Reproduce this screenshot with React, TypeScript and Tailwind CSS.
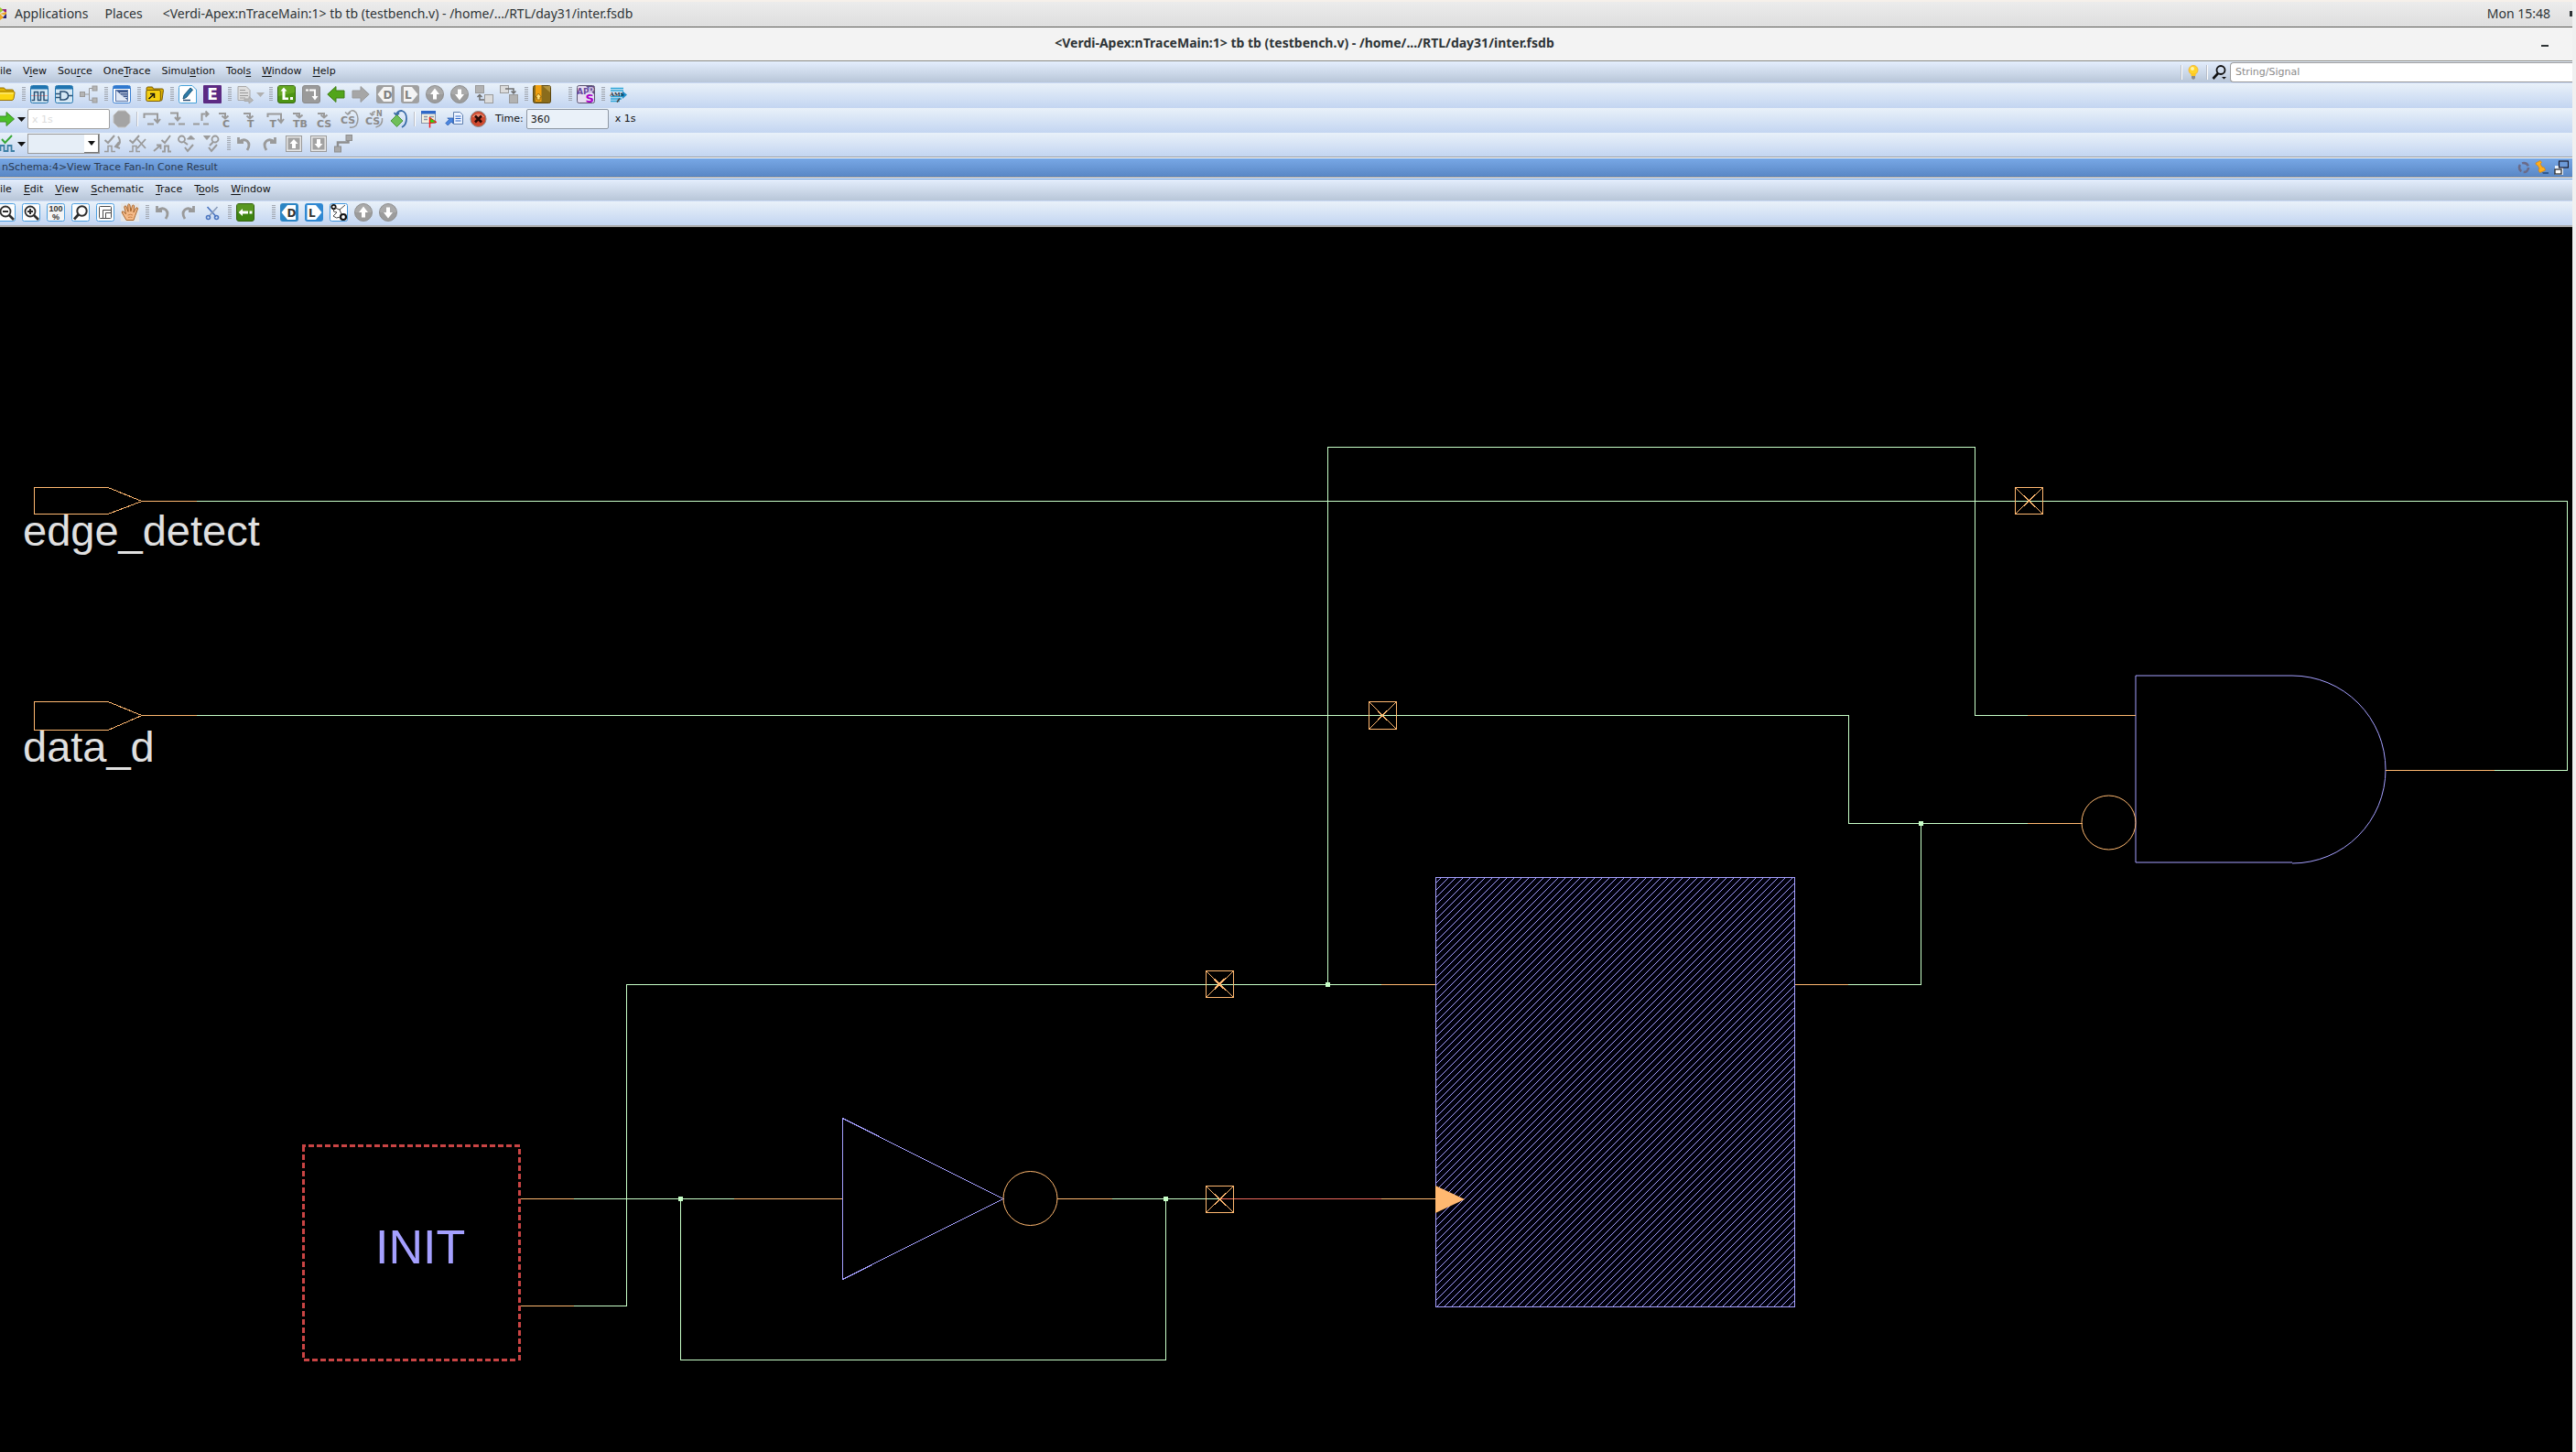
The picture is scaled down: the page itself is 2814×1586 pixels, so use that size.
import React from "react";

const G = "#9a9a9a";
const icons: Record<string, React.ReactNode> = {
  folder: (
    <g stroke="#9a7200">
      <path d="M1 4.5q0-1.500 1.500-1.500h5l1.500 2h7.500q1 0 1 1v2H1z" fill="#e0b400" />
      <path d="M1 8.500q0-1.500 1.500-1.500h15q2 0 1.500 1.500l-1 6q-.5 2-2 2H2.500q-1.500 0-1.500-1.500z" fill="#fbd510" />
      <path d="M2 9h15.500" stroke="#fff2a0" />
    </g>
  ),
  wave: (
    <g>
      <rect x=".5" y=".5" width="19" height="19" rx="2" fill="#d5e8f5" stroke="#2476ae" />
      <path d="M1 1h18v3.500H1z" fill="#1f74b0" />
      <path d="M1 11.500h18" stroke="#f0a0a0" />
      <path d="M1.500 16.500h3v-9h4v9h3v-9h3.500v9h4" fill="none" stroke="#2a4f73" strokeWidth="1.500" />
    </g>
  ),
  gate: (
    <g>
      <rect x=".5" y=".5" width="19" height="19" rx="2" fill="#d5e8f5" stroke="#2476ae" />
      <path d="M1 1h18v3.500H1z" fill="#1f74b0" />
      <path d="M6 7h4q4.500.5 4.500 4.500T10 16H6zM1 9.500h5M1 13.500h5M14.500 11.500H19" fill="none" stroke="#2a4f73" strokeWidth="1.500" />
    </g>
  ),
  tree: (
    <g fill="#b4b4b4" stroke={G}>
      <path d="M5 10h6M10.500 3.500v13M10.500 3.500h4M10.500 16.500h4" fill="none" />
      <rect x=".5" y="7.500" width="5" height="5" />
      <rect x="14" y="1" width="5" height="5" />
      <rect x="14" y="14" width="5" height="5" />
    </g>
  ),
  schema: (
    <g>
      <rect x=".5" y=".5" width="19" height="19" rx="2" fill="#fff" stroke="#3a7fd0" />
      <path d="M1 1h18v3H1z" fill="#2f78cf" />
      <rect x="3.500" y="5.500" width="13" height="12" fill="#dfe7f5" stroke="#5a78ac" />
      <path d="M4 6h12v10z" fill="#3c5588" />
      <path d="M8 8.500h8M10 11h6M13 13.500h3" stroke="#c8d4ea" />
    </g>
  ),
  folderPin: (
    <g stroke="#7a5a00">
      <path d="M1 4q0-2 1.500-2h5l1 2H18q1.500 0 1.500 1.500L18 16q0 1-1.500 1H3z" fill="#d9ae00" />
      <rect x=".8" y="5.500" width="15.500" height="12" rx="1.500" fill="#f4cf12" />
      <path d="M3.500 15 8.500 10.500M5 9.500h4.500V14" stroke="#111" strokeWidth="1.500" fill="none" />
    </g>
  ),
  pencil: (
    <g>
      <path d="M2.500.5H15l4.500 4.500v14.500H2.500Q.5 19.500.5 17.500v-15Q.5.500 2.500.5z" fill="#fff" stroke="#45a0d8" />
      <path d="m6 11 7-8 2.500 2-7 8.500L5 15z" fill="#2e7ca8" stroke="#1c5578" />
      <path d="M5 16.500h8" stroke="#2a4f73" strokeWidth="1.500" />
    </g>
  ),
  e: (
    <g>
      <rect width="20" height="20" rx="1" fill="#5c2a83" />
      <text x="10" y="16" textAnchor="middle" fontSize="17" fontWeight="700" fill="#fff">E</text>
    </g>
  ),
  doc: (
    <g stroke="#a8a8a8">
      <path d="M2 1.500h9l4 4v11H2z" fill="#dedede" />
      <path d="M4 5.500h6M4 8.500h9M4 11.500h9M4 14h6" stroke={G} />
      <path d="M9 15h5v-2.500l4.500 4-4.500 3.500v-2.500H9z" fill="#b8b8b8" />
    </g>
  ),
  loadGreen: (
    <g>
      <rect x=".5" y=".5" width="19" height="19" rx="2.500" fill="#4d9414" stroke="#3a6b12" />
      <path d="M1 1h18v7Q10 10 1 12z" fill="#77b52c" opacity=".6" />
      <path d="M3.500 6.500 7 2.500l3.500 4H8.500v7H12V16H5.500V6.500zM14 13h3v3h-3z" fill="#fff" />
    </g>
  ),
  loadGray: (
    <g>
      <rect x=".5" y=".5" width="19" height="19" rx="2.500" fill={G} stroke="#8a8a8a" />
      <path d="M4 4.500h3v2H4zM8 4.500h7V12h2.500L14 16.500 10.500 12H13V6.500H8z" fill="#fff" />
    </g>
  ),
  leftGreen: <path d="M.8 10 10 1.500V6h9v8h-9v4.500z" fill="#52a51a" stroke="#3e7c15" />,
  rightGray: <path d="M19.200 10 10 1.500V6H1v8h9v4.500z" fill="#a6a6a6" stroke="#999" />,
  dGray: (
    <g>
      <rect width="20" height="20" rx="3" fill="#a0a0a0" />
      <path d="M1.500 10 8 2h9v16H8z" fill="#f4f4f4" />
      <text x="7.500" y="14.500" fontSize="12" fontWeight="700" fill="#808080">D</text>
    </g>
  ),
  lGray: (
    <g>
      <rect width="20" height="20" rx="3" fill="#a0a0a0" />
      <path d="M18.500 10 12 2H3v16h9z" fill="#f4f4f4" />
      <text x="4" y="14.500" fontSize="12" fontWeight="700" fill="#808080">L</text>
    </g>
  ),
  up: (
    <g>
      <circle cx="10" cy="10" r="9.500" fill="#9c9c9c" stroke="#8f8f8f" />
      <path d="M1 10a9 9 0 0 1 18 0z" fill="#b4b4b4" opacity=".6" />
      <path d="M10 3.500 15 10h-3v5.500H8V10H5z" fill="#fff" />
    </g>
  ),
  down: (
    <g>
      <circle cx="10" cy="10" r="9.500" fill="#9c9c9c" stroke="#8f8f8f" />
      <path d="M1 10a9 9 0 0 1 18 0z" fill="#b4b4b4" opacity=".6" />
      <path d="M10 16.500 5 10h3V4.500h4V10h3z" fill="#fff" />
    </g>
  ),
  hierUp: (
    <g>
      <rect x=".5" y=".5" width="9" height="8" fill="#b2b2b2" stroke="#9a9a9a" />
      <rect x="10.500" y="10.500" width="9" height="9" fill="#dcdcdc" stroke="#9a9a9a" />
      <path d="M10 16H5v-5M2.500 13 5 10.500 7.500 13" fill="none" stroke="#6f6f6f" strokeWidth="1.500" />
    </g>
  ),
  hierDown: (
    <g>
      <rect x=".5" y=".5" width="9" height="8" fill="#dcdcdc" stroke="#9a9a9a" />
      <rect x="10.500" y="10.500" width="9" height="9" fill="#b2b2b2" stroke="#9a9a9a" />
      <path d="M6 4h9v5M12.500 6.500 15 9l2.500-2.500" fill="none" stroke="#6f6f6f" strokeWidth="1.500" />
    </g>
  ),
  bookmark: (
    <g>
      <rect x=".5" y=".5" width="19" height="19" rx="2" fill="#8a6c1c" stroke="#5b4610" />
      <path d="M11 1h8v7z" fill="#b39440" />
      <path d="M3 0h6.500v18H3z" fill="#f0a010" />
      <path d="M3 13 6.200 9l3.300 4H8v3H4.500v-3z" fill="#ffe07a" stroke="#8a5a00" strokeWidth=".8" />
    </g>
  ),
  apps: (
    <g>
      <rect x=".5" y=".5" width="19" height="19" rx="2" fill="#e6def2" stroke="#5a5570" />
      <path d="M10 1h9v9z" fill="#5d4a86" />
      <text x="0" y="10" fontSize="9" fontWeight="700" fill="#6a4a9c">AP</text>
      <text x="12.500" y="9" fontSize="9" fontWeight="700" fill="#c8bce0">P</text>
      <text x="9.500" y="18.500" fontSize="13" fontWeight="700" fill="#a800c8">S</text>
    </g>
  ),
  ams: (
    <g>
      <path d="M1 3.500h14M1 6h14M1 12.500h14M1 15h12M1 17.500h10" stroke="#2ea6d8" strokeWidth="1.500" />
      <path d="M12 9h2V6.500l5 4-5 4.500v-2.500h-2z" fill="#1e90c8" />
      <text x="0" y="11.500" fontSize="7" fontWeight="700" fontFamily="Liberation Serif, serif" fill="#10242e">AMS</text>
      <path d="m8 18.500 3-4" stroke="#444" strokeWidth="1.500" />
    </g>
  ),
  runGreen: <path d="M1 7h9V2.500L18.500 10 10 17.500V13H1z" fill="#4cc02a" stroke="#3a8a22" />,
  octagon: <path d="M6 1h8l5 5v8l-5 5H6l-5-5V6z" fill="#a4a4a4" stroke="#c4c4c4" />,
  stepOver: <path d="M1.500 9V4.500H16V13M12.500 10l3.500 4 3-4M5 15.500h7" fill="none" stroke={G} strokeWidth="2" />,
  stepIn: <path d="M3 3.500h8V11M8 8l3 3.500L14 8M1 15.500h7M12 15.500h7" fill="none" stroke={G} strokeWidth="2" />,
  stepOut: <path d="M10.500 12V4.500H17M14.500 1.500l3 3-3 3M1 15.500h7M12 15.500h6" fill="none" stroke={G} strokeWidth="2" />,
  c: (
    <g>
      <path d="M2 4h7v5M5.500 6.500 9 9.500l3.500-3" fill="none" stroke={G} strokeWidth="2" />
      <text x="6" y="19" fontSize="11" fontWeight="700" fill="#8a8a8a">C</text>
    </g>
  ),
  t: (
    <g>
      <path d="M2 4h7v5M5.500 6.500 9 9.500l3.500-3" fill="none" stroke={G} strokeWidth="2" />
      <text x="6" y="19" fontSize="11" fontWeight="700" fill="#8a8a8a">T</text>
    </g>
  ),
  tOver: (
    <g>
      <path d="M1.500 8V4.500H16V13M12.500 10l3.500 4 3-4" fill="none" stroke={G} strokeWidth="2" />
      <text x="3.500" y="18.500" fontSize="11" fontWeight="700" fill="#8a8a8a">T</text>
    </g>
  ),
  tb: (
    <g>
      <path d="M2 4h7v4M5.500 5.500 9 8.500l3.500-3" fill="none" stroke={G} strokeWidth="2" />
      <text x="2" y="19" fontSize="11" fontWeight="700" fill="#8a8a8a">TB</text>
    </g>
  ),
  cs: (
    <g>
      <path d="M2 4h7v4M5.500 5.500 9 8.500l3.500-3" fill="none" stroke={G} strokeWidth="2" />
      <text x="1" y="19" fontSize="11" fontWeight="700" fill="#8a8a8a">CS</text>
    </g>
  ),
  csLoop: (
    <g>
      <path d="M8 4.500Q12-2 17 3q4 7 0 14-3 3-7 2M5 2.500 8 5l3-2" fill="none" stroke={G} strokeWidth="1.500" />
      <text x="0" y="14.500" fontSize="11" fontWeight="700" fill="#8a8a8a">CS</text>
    </g>
  ),
  csn: (
    <g>
      <path d="M11 2Q7 2 7.500 5M5 3.500l2.500 2.500L10 4M18.500 9q1 8-7 10" fill="none" stroke={G} strokeWidth="1.500" />
      <text x="12" y="6.500" fontSize="8" fontWeight="700" fill="#8a8a8a">N</text>
      <text x="0" y="15.500" fontSize="11" fontWeight="700" fill="#8a8a8a">CS</text>
    </g>
  ),
  diamond: (
    <g>
      <path d="M7 4.500Q9 .8 13 1q5 1.500 5 8.500 0 7-5 9.500M4.500 3 7 6l3-2.500" fill="none" stroke="#3a6ca8" strokeWidth="1.800" />
      <path d="m1 12 6.500-6.500L14 12l-6.500 6.500z" fill="#6fbf5a" stroke="#4d9440" />
    </g>
  ),
  flagWin: (
    <g>
      <rect x="1.500" y="1.500" width="15" height="13" fill="#f2f0e0" stroke="#8a93a8" />
      <path d="M1 1h16v3.500H1z" fill="#2f68c8" />
      <path d="M4 7.500h4M4 10.500h4M10 7.500h5" stroke="#8a93a8" strokeWidth="1.500" />
      <path d="M10.500 8.500 18 13.500l-7.500 1z" fill="#22e010" stroke="#f01818" />
      <path d="M10.500 8v11.500" stroke="#f01818" strokeWidth="1.500" />
    </g>
  ),
  docLink: (
    <g>
      <path d="M9.500 2.500h7l3 3v10h-10z" fill="#eef4ff" stroke="#5f7fae" />
      <path d="M11.500 7h6M11.500 9.500h6M11.500 12h6" stroke="#2f68c8" strokeWidth="1.200" />
      <path d="m.8 14.500 4-4-2-1.500H9V15l-1.800-2-4 4z" fill="#4a86e0" stroke="#2a5cb0" strokeWidth=".8" />
    </g>
  ),
  stopX: (
    <g>
      <circle cx="9.500" cy="10" r="8.500" fill="#cf4a30" stroke="#8b8b8b" />
      <path d="M3 8a7 6 0 0 1 13 0z" fill="#ec8a70" />
      <path d="m6 6.500 7 7m0-7-7 7" stroke="#2a0a06" strokeWidth="2.600" />
    </g>
  ),
  checkWave: (
    <g fill="none">
      <path d="M3.500 18v-6h4v6h4v-6h4v6H19" stroke="#3d7fa4" strokeWidth="1.800" />
      <path d="m5 5 3.500 4L16 1" stroke="#38a838" strokeWidth="2" />
    </g>
  ),
  chk1: (
    <g fill="none" stroke={G}>
      <path d="M1.500 6 5 9l7-8" strokeWidth="2" />
      <path d="M1 18.500h4v-6h4v6h4" strokeWidth="1.500" />
      <path d="M16 2q5 7-2 11M17 8l-4 5 5 2" strokeWidth="2" />
    </g>
  ),
  chk2: (
    <g fill="none" stroke={G}>
      <path d="M1.500 6 5 9l7-8" strokeWidth="2" />
      <path d="M1 18.500h4v-6h4v6h4" strokeWidth="1.500" />
      <path d="m10 5 9 10M19 5l-9 10" strokeWidth="1.800" />
    </g>
  ),
  chk3: (
    <g fill="none" stroke={G}>
      <path d="M9.500 6 13 9l6-8" strokeWidth="2" />
      <path d="M10 18.500h3v-6h4v6h3M1 18l7-6M4 11.500h4.500V16" strokeWidth="1.800" />
    </g>
  ),
  find1: (
    <g fill="none" stroke={G}>
      <circle cx="4.500" cy="5" r="3.500" strokeWidth="1.800" />
      <path d="m7 8 4 3M8 14l3 4 6-7" strokeWidth="2" />
      <path d="m10.500 5 4-4 4 4z" fill={G} />
    </g>
  ),
  find2: (
    <g fill="none" stroke={G}>
      <circle cx="14" cy="5" r="3.500" strokeWidth="1.800" />
      <path d="m12 8-4 4M7 14l3 4 6-7" strokeWidth="2" />
      <path d="m1.500 1.500 3.500 4 3.500-4z" fill={G} />
    </g>
  ),
  undo: <path d="M3.500 3v5.500H9M4 8q5-4 9-1 4 4 0 10" fill="none" stroke={G} strokeWidth="2.800" />,
  redo: <path d="M16.500 3v5.500H11M16 8q-5-4-9-1-4 4 0 10" fill="none" stroke={G} strokeWidth="2.800" />,
  boxUp: (
    <g>
      <rect x="1.500" y="1.500" width="17" height="17" fill="#e6e6e6" stroke={G} />
      <rect x="3.500" y="3.500" width="13" height="13" fill="#a2a2a2" />
      <path d="m10 5 4.500 5H12v5H8v-5H5.500z" fill="#fff" />
    </g>
  ),
  boxDown: (
    <g>
      <rect x="1.500" y="1.500" width="17" height="17" fill="#e6e6e6" stroke={G} />
      <rect x="3.500" y="3.500" width="13" height="13" fill="#a2a2a2" />
      <path d="m10 15 4.500-5H12V5H8v5H5.500z" fill="#fff" />
    </g>
  ),
  route: (
    <g fill="#a8a8a8" stroke="#8e8e8e">
      <path d="M4 13V8.500h11.500V6" fill="none" strokeWidth="2.500" />
      <rect x="13" y=".5" width="6.500" height="6" />
      <rect x=".5" y="13" width="7" height="6" />
    </g>
  ),
  zoomOut: (
    <g>
      <rect x=".5" y=".5" width="19" height="19" rx="2" fill="#fdfdfd" stroke="#4d9fe0" />
      <circle cx="9" cy="9" r="5.500" fill="none" stroke="#2c2c2c" strokeWidth="1.800" />
      <path d="m13 13 5 5" stroke="#2c2c2c" strokeWidth="2.600" />
      <path d="M6 9h6" stroke="#2c2c2c" strokeWidth="2" />
    </g>
  ),
  zoomIn: (
    <g>
      <rect x=".5" y=".5" width="19" height="19" rx="2" fill="#fdfdfd" stroke="#4d9fe0" />
      <circle cx="9" cy="9" r="5.500" fill="none" stroke="#2c2c2c" strokeWidth="1.800" />
      <path d="m13 13 5 5" stroke="#2c2c2c" strokeWidth="2.600" />
      <path d="M6 9h6M9 6v6" stroke="#2c2c2c" strokeWidth="2" />
    </g>
  ),
  zoom100: (
    <g>
      <rect x=".5" y=".5" width="19" height="19" rx="2" fill="#f4f4f4" stroke="#4d9fe0" />
      <text x="10" y="9" textAnchor="middle" fontSize="9" fontWeight="700" fontFamily="Liberation Sans, sans-serif" fill="#333">100</text>
      <text x="10" y="18" textAnchor="middle" fontSize="9" fontWeight="700" fontFamily="Liberation Sans, sans-serif" fill="#333">%</text>
    </g>
  ),
  zoomArea: (
    <g>
      <rect x=".5" y=".5" width="19" height="19" rx="2" fill="#fdfdfd" stroke="#4d9fe0" />
      <circle cx="11.500" cy="8.500" r="5.200" fill="none" stroke="#2c2c2c" strokeWidth="2" />
      <path d="m7.500 12.500-4.500 5" stroke="#2c2c2c" strokeWidth="2.800" />
    </g>
  ),
  fit: (
    <g>
      <rect x=".5" y=".5" width="19" height="19" rx="2" fill="#fdfdfd" stroke="#4d9fe0" />
      <rect x="3.500" y="3.500" width="13" height="13" rx="1" fill="none" stroke="#4a4a4a" />
      <path d="M7.500 16.500V7.500H16.500M10.500 16v-5.500H16" fill="none" stroke="#4a4a4a" />
    </g>
  ),
  hand: (
    <g>
      <rect width="20" height="20" fill="#e6e6e6" />
      <path d="M6 18.500 1.200 10q0-1.500 1.500-1.200l2.800 3L3.800 4q.5-1.800 2-.8l2.200 6-.3-7.500q1-1.700 2.200 0l1 7.300L12.500 2.500q1.500-1.200 2.200.3l-.8 7.200 2.800-5q1.600-.8 1.900.8l-3 8-1.600 4.700z" fill="#f4b987" stroke="#a8662c" />
      <path d="M7.500 13q3-1.500 5.500 0M8 15.500q2.500-.8 4.500 0" stroke="#c98248" fill="none" />
    </g>
  ),
  cut: (
    <g fill="none" stroke="#4a74c0" strokeWidth="1.600">
      <path d="M4.500 4 14 14.500" />
      <path d="M15.500 4 6 14.500" stroke="#8a9cba" />
      <circle cx="5.500" cy="15.500" r="2" />
      <circle cx="14.500" cy="15.500" r="2" />
    </g>
  ),
  backGreen: (
    <g>
      <rect x=".5" y=".5" width="19" height="19" rx="2.500" fill="#3f8412" stroke="#35610f" />
      <path d="M1 1h18v8H1z" fill="#6aa32c" opacity=".6" />
      <path d="m2.500 10 4.500-4v2.500h6v3H7V14zM14.500 8.500h3v3h-3z" fill="#fff" />
    </g>
  ),
  dBlue: (
    <g>
      <rect width="20" height="20" rx="3" fill="#2b85c4" />
      <path d="M1.500 10 8 2h9v16H8z" fill="#fff" />
      <text x="7.500" y="14.500" fontSize="12" fontWeight="700" fill="#333">D</text>
    </g>
  ),
  lBlue: (
    <g>
      <rect width="20" height="20" rx="3" fill="#2f88d2" />
      <path d="M18.500 10 12 2H2.500v16H12z" fill="#fff" />
      <text x="4" y="14.500" fontSize="12" fontWeight="700" fill="#333">L</text>
    </g>
  ),
  trace: (
    <g>
      <rect x=".5" y=".5" width="19" height="19" rx="2" fill="#fff" stroke="#3f95dc" />
      <circle cx="4.500" cy="4" r="2.200" fill="none" stroke="#111" strokeWidth="1.800" />
      <circle cx="15" cy="15" r="3" fill="none" stroke="#111" strokeWidth="2.200" />
      <path d="M4.500 6v3l3.500 1-4 4q3 3.500 8 1M6 5l5 2 6-5M11 7l2 5" fill="none" stroke="#444" />
    </g>
  ),
};

function Icon({ name }: { name: string }) {
  return (
    <svg className="h-5 w-5 shrink-0 overflow-visible" viewBox="0 0 20 20" fontFamily="DejaVu Sans, sans-serif" aria-hidden="true">
      {icons[name]}
    </svg>
  );
}

function Tool({ name, label }: { name: string; label: string }) {
  return (
    <button type="button" aria-label={label} className="flex w-[27px] shrink-0 pl-[3px]">
      <Icon name={name} />
    </button>
  );
}

function Tools({ items }: { items: [string, string][] }) {
  return (
    <>
      {items.map(([n, l]) => (
        <Tool key={n + l} name={n} label={l} />
      ))}
    </>
  );
}

function Handle() {
  return (
    <span className="flex w-[9px] shrink-0 pl-[3px]">
      <svg className="h-4 w-1" viewBox="0 0 4 16" shapeRendering="crispEdges" aria-hidden="true">
        {[0, 2, 4, 6, 8, 10, 12, 14].map((y) => (
          <path key={y} d={`M0 ${y}.5h4`} stroke="#a2a8b2" />
        ))}
      </svg>
    </span>
  );
}

function Divider() {
  return (
    <span className="flex w-1.5 shrink-0 justify-center">
      <span className="h-4 w-px bg-[#b9bec8]" />
      <span className="h-4 w-px bg-white" />
    </span>
  );
}

function DropArrow({ tone, label }: { tone: string; label: string }) {
  return (
    <button type="button" aria-label={label} className="mr-0.5 -ml-0.5 flex w-[9px] shrink-0">
      <svg className="h-[5px] w-[9px]" viewBox="0 0 9 5" aria-hidden="true">
        <path d="M0 0h9L4.500 5z" fill={tone} />
      </svg>
    </button>
  );
}

function Menu({ items, gap }: { items: [string, string, string][]; gap: string }) {
  return (
    <nav className={`flex pb-px ${gap}`}>
      {items.map(([a, u, b]) => (
        <button type="button" key={a + u + b} className="text-[11px] leading-4 whitespace-pre text-[#111]">
          {a}
          {u && <span className="underline underline-offset-2">{u}</span>}
          {b}
        </button>
      ))}
    </nav>
  );
}

const toolRow = "flex items-start overflow-hidden bg-linear-to-b from-[#e9f1f9] to-[#c3d5f1]";
const menuRow = "flex h-6 items-center overflow-hidden border-b border-[#c8d8f4] bg-linear-to-b from-[#e4eefd] to-[#b8c6d8]";

function Port({ y, h, label, name }: { y: number; h: number; label: number; name: string }) {
  return (
    <g>
      <path d={`M155 ${y}L118 ${y - 15}H37.5V${y - 15 + h}H118zM155 ${y}H215`} fill="none" stroke="#ffb870" shapeRendering="crispEdges" />
      <text x="25" y={label} fontSize="47" fill="#e0e0e0">{name}</text>
    </g>
  );
}

function CrossBox({ x, y, h, bold }: { x: number; y: number; h: number; bold?: boolean }) {
  const m = y + h / 2;
  const c = x + 14.5;
  return (
    <g stroke="#ffb870" fill="none" shapeRendering="crispEdges">
      <rect x={x} y={y} width="30" height={h} />
      <path d={`M${x} ${y}l30 ${h}M${x + 30} ${y}l-30 ${h}`} />
      {bold && <path d={`M${c - 5} ${m - 5}l10 10M${c + 5} ${m - 5}l-10 10`} strokeWidth="2" />}
    </g>
  );
}

function Schematic() {
  return (
    <svg className="block h-auto w-full bg-black" viewBox="0 248 2810 1338" fontFamily="Liberation Sans, Arial, sans-serif" role="img" aria-label="Fan-in cone schematic">
      <defs>
        <pattern id="hatch" width="8" height="8" patternUnits="userSpaceOnUse">
          <rect width="8" height="8" fill="#00000c" />
          <path
            d="M0 4h1v1h-1zM1 3h1v1h-1zM2 2h1v1h-1zM3 1h1v1h-1zM4 0h1v1h-1zM5 7h1v1h-1zM6 6h1v1h-1zM7 5h1v1h-1z"
            fill="#a5a0ff"
            shapeRendering="crispEdges"
          />
        </pattern>
      </defs>

      <rect x="1568.5" y="958.5" width="392" height="469" fill="url(#hatch)" stroke="#a5a0ff" shapeRendering="crispEdges" />
      <path d="M920.5 1221.500V1397.500L1096 1309.500z" fill="none" stroke="#a5a0ff" shapeRendering="crispEdges" />
      <path d="M2504 738H2333V942H2504M2504 738A102 102.500 0 0 1 2504 943" fill="none" stroke="#a5a0ff" />

      <g fill="none" stroke="#c8ffc8" shapeRendering="crispEdges">
        <path d="M215 547.500H2804.500V841.500H2725" />
        <path d="M215 781.500H2019.500V899.500H2215" />
        <path d="M1450.500 1075.500V488.500H2157.500V781.500H2215" />
        <path d="M2098.500 899.500V1075.500H2019" />
        <path d="M627 1426.500H684.500V1075.500H1509" />
        <path d="M627 1309.500H802M1215 1309.500H1332" />
        <path d="M743.500 1309.500V1485.500H1273.500V1309.500" />
      </g>
      <g fill="none" stroke="#ffb870" shapeRendering="crispEdges">
        <path d="M2606 841.500H2725M2215 781.500H2333M2215 899.500H2275M1961 1075.500H2019M1509 1075.500H1568" />
        <path d="M569 1309.500H627M569 1426.500H627M802 1309.500H920M1155 1309.500H1215M1509 1309.500H1568" />
      </g>
      <path d="M1332 1309.500H1509" stroke="#ec6a5e" shapeRendering="crispEdges" />
      <g fill="none" stroke="#ffb870">
        <circle cx="2303.5" cy="898.5" r="29.5" />
        <circle cx="1125.5" cy="1309" r="29.5" />
      </g>
      <path d="M1568 1295L1600 1310L1568 1325z" fill="#ffb870" />

      {[[1450.5, 1075.5], [2098.5, 899.5], [743.5, 1309.5], [1273.5, 1309.5]].map(([x, y]) => (
        <rect key={x} x={x - 2.5} y={y - 2.5} width="5" height="5" fill="#c8ffc8" />
      ))}
      <CrossBox x={2201.5} y={532.5} h={29} />
      <CrossBox x={1495.5} y={766.5} h={30} bold />
      <CrossBox x={1317.5} y={1060.5} h={29} bold />
      <CrossBox x={1317.5} y={1295.5} h={29} />

      <Port y={547.5} h={29} label={596} name="edge_detect" />
      <Port y={781.5} h={31} label={832} name="data_d" />

      <g stroke="#c94444" strokeWidth="3" strokeDasharray="6 3" shapeRendering="crispEdges">
        <path d="M330 1251.500H568" strokeDashoffset="2" />
        <path d="M331.500 1252V1484" />
        <path d="M567.500 1255V1486" />
        <path d="M332 1485.500H564" />
      </g>
      <text x="410" y="1380" fontSize="52" fill="#a5a0ff">INIT</text>
    </svg>
  );
}

export default function App() {
  return (
    <div className="min-h-screen overflow-hidden border-t-2 border-[#f6f0ea] bg-[#f0f0f0] pr-1 font-['DejaVu_Sans',sans-serif] text-[11px] text-[#111]">
      <header className="flex h-7 items-center overflow-hidden border-b border-[#5c5c58] bg-linear-to-b from-[#ececec] to-[#dedede] pb-0.5 font-['Noto_Sans',sans-serif] text-[14px] leading-5 text-[#2e3436]">
        <svg className="h-4 w-2 shrink-0" viewBox="8 0 8 16" aria-hidden="true">
          <path d="M8 1l4 3-4 3z" fill="#9ccd2a" />
          <path d="M10 3h5v5z" fill="#932279" />
          <path d="M8 8l7-2v4z" fill="#efa724" />
          <path d="M10 13h5V8z" fill="#262577" />
          <path d="M8 15l4-3-4-4z" fill="#efa724" />
        </svg>
        <button type="button" className="ml-2">Applications</button>
        <button type="button" className="ml-[18px]">Places</button>
        <button type="button" className="ml-[22px] whitespace-nowrap">&lt;Verdi-Apex:nTraceMain:1&gt; tb tb (testbench.v) - /home/.../RTL/day31/inter.fsdb</button>
        <time className="ml-auto">Mon 15:48</time>
        <span className="ml-[21px] h-1.5 w-[3px] bg-[#2e3436]" />
      </header>

      <div className="flex h-[37px] items-center border-b border-[#8c8c86] bg-[#f3f3f3] pl-10 font-['Noto_Sans',sans-serif] text-[#2e3436]">
        <h1 className="min-w-0 flex-1 pb-0.5 text-center text-[14px] leading-5 font-bold">
          &lt;Verdi-Apex:nTraceMain:1&gt; tb tb (testbench.v) - /home/.../RTL/day31/inter.fsdb
        </h1>
        <button type="button" aria-label="Minimize" className="mt-1 mr-[26px] -ml-[34px] flex h-5 w-2 items-center">
          <span className="h-0.5 w-2 bg-[#2e3436]" />
        </button>
      </div>

      <div className={menuRow}>
        <Menu
          gap="gap-3"
          items={[
            ["", "", "ile"],
            ["V", "i", "ew"],
            ["Sou", "r", "ce"],
            ["One", "T", "race"],
            ["Simul", "a", "tion"],
            ["Tool", "s", ""],
            ["", "W", "indow"],
            ["", "H", "elp"],
          ]}
        />
        <div className="ml-auto flex h-full items-center">
          <Divider />
          <button type="button" aria-label="Tips" className="mr-1.5 ml-1">
            <svg className="h-4 w-3" viewBox="0 0 12 16" aria-hidden="true">
              <circle cx="6" cy="5.5" r="5" fill="#ffd42a" stroke="#f0b840" />
              <path d="M3.500 9h5v3h-5z" fill="#ffc820" />
              <path d="M4 12h4v2.500L6 16l-2-1.500z" fill="#8b8b8b" />
              <circle cx="5" cy="4" r="2" fill="#fff3a8" />
            </svg>
          </button>
          <Divider />
          <button type="button" aria-label="Search options" className="mx-0.5">
            <svg className="h-4 w-[18px]" viewBox="0 0 18 16" aria-hidden="true">
              <circle cx="10" cy="5.5" r="4.500" fill="none" stroke="#111" strokeWidth="1.800" />
              <path d="M7 9l-5.500 6" stroke="#111" strokeWidth="2.600" />
              <path d="M11 13h5l-2.500 2.500z" fill="#111" />
            </svg>
          </button>
          <input
            aria-label="String/Signal"
            placeholder="String/Signal"
            className="h-[22px] w-[374px] rounded-l-sm border border-r-0 border-[#9b9b9b] bg-white px-[5px] text-[11px] placeholder:text-[#8a8a8a]"
          />
        </div>
      </div>

      <div className={`${toolRow} h-[27px] pt-0.5`}>
        <div className="-ml-1.5 flex items-center">
          <Tool name="folder" label="Open" />
          <Handle />
          <Tools items={[["wave", "New waveform"], ["gate", "New schematic"], ["tree", "Hierarchy"]]} />
          <Handle />
          <Tool name="schema" label="Flow view" />
          <Handle />
          <Tool name="folderPin" label="Restore session" />
          <Handle />
          <Tools items={[["pencil", "Edit source"], ["e", "Editor"]]} />
          <Handle />
          <Tool name="doc" label="Report" />
          <DropArrow tone="#b0b0b0" label="Report options" />
          <Handle />
          <Tools
            items={[
              ["loadGreen", "Trace load"],
              ["loadGray", "Trace driver"],
              ["leftGreen", "Back"],
              ["rightGray", "Forward"],
              ["dGray", "Driver"],
              ["lGray", "Load"],
              ["up", "Previous"],
              ["down", "Next"],
              ["hierUp", "Push out"],
              ["hierDown", "Push in"],
            ]}
          />
          <Handle />
          <Tool name="bookmark" label="Bookmark" />
          <span className="w-3" />
          <Handle />
          <Tool name="apps" label="Apps" />
          <Handle />
          <Tool name="ams" label="AMS" />
        </div>
      </div>

      <div className={`${toolRow} h-[27px] pt-px`}>
        <div className="-ml-1.5 flex items-center">
          <Tool name="runGreen" label="Run" />
          <DropArrow tone="#111" label="Run options" />
          <input aria-label="Run time" placeholder="x 1s" className="h-[22px] w-[90px] rounded-xs border border-[#a0a0a0] bg-white px-1 text-[11px] placeholder:text-[#dcdcdc]" />
          <Tool name="octagon" label="Stop" />
          <Divider />
          <Tools
            items={[
              ["stepOver", "Step over"],
              ["stepIn", "Step in"],
              ["stepOut", "Step out"],
              ["c", "Step class"],
              ["t", "Step thread"],
              ["tOver", "Next thread"],
              ["tb", "Step testbench"],
              ["cs", "Step constraint"],
              ["csLoop", "Constraint loop"],
              ["csn", "Next constraint"],
              ["diamond", "Rerun"],
            ]}
          />
          <Divider />
          <Tools items={[["flagWin", "Breakpoints"], ["docLink", "Go to source"], ["stopX", "End simulation"]]} />
          <label htmlFor="time" className="mr-[3px] ml-1 leading-4">Time:</label>
          <input id="time" defaultValue="360" className="h-[22px] w-[90px] rounded-xs border border-[#8f98a4] bg-[#eaf1f9] px-1 text-[11px]" />
          <span className="ml-[7px] leading-4 whitespace-nowrap">x 1s</span>
        </div>
      </div>

      <div className={`${toolRow} h-[26px] pt-px`}>
        <div className="-ml-1.5 flex items-center">
          <Tool name="checkWave" label="Check waveform" />
          <DropArrow tone="#111" label="Check options" />
          <span className="relative mr-px flex">
            <select aria-label="Signal value" className="h-[22px] w-[79px] appearance-none border border-[#9b9b9b] bg-[#e6eef7]">
              <option></option>
            </select>
            <span className="pointer-events-none absolute inset-y-px right-px flex w-4 items-center justify-center border-r border-b border-[#777] bg-white">
              <svg className="h-[5px] w-2" viewBox="0 0 8 5" aria-hidden="true">
                <path d="M0 0h8L4 5z" fill="#111" />
              </svg>
            </span>
          </span>
          <Tools items={[["chk1", "Re-check"], ["chk2", "Remove check"], ["chk3", "Go to check"], ["find1", "Find previous"], ["find2", "Find next"]]} />
          <Handle />
          <Tools items={[["undo", "Undo"], ["redo", "Redo"], ["boxUp", "Move up"], ["boxDown", "Move down"], ["route", "Route"]]} />
        </div>
      </div>

      <section className="border-t border-[#9b9b9b]">
        <div className="flex h-[22px] items-center border-t border-b border-t-white border-b-[#9b9b9b] bg-linear-to-b from-[#78a8e6] to-[#5987c5]">
          <h2 className="pl-0.5 text-[11px] leading-4 whitespace-nowrap text-[#2b3a50]">nSchema:4&gt;View Trace Fan-In Cone Result</h2>
          <div className="mr-1 ml-auto flex items-center gap-[5px]">
            <button type="button" aria-label="Refresh">
              <svg className="h-3.5 w-3.5" viewBox="0 0 14 14" aria-hidden="true">
                <circle cx="7" cy="7" r="5" fill="none" stroke="#6b6b88" strokeWidth="2.600" strokeDasharray="8 2.500" />
              </svg>
            </button>
            <button type="button" aria-label="Pin">
              <svg className="h-4 w-4" viewBox="0 0 16 16" aria-hidden="true">
                <path d="M8 13h7v2H9z" fill="#2d5a94" />
                <path d="M1 3l5-2.500 1.500 2L6 4l2 3.500 2.500.5 1 3-6 2.500-1.500-2.500 1-2L3 5.500 1.500 5z" fill="#ffae1c" stroke="#d88408" strokeWidth=".7" />
              </svg>
            </button>
            <button type="button" aria-label="Undock">
              <svg className="h-4 w-4" viewBox="0 0 16 16" aria-hidden="true">
                <path d="M1 6h9v10H1z" fill="#e8f0fa" />
                <rect x="1" y="10" width="7" height="5" fill="#fff" stroke="#222" strokeWidth="1.200" />
                <rect x="5.500" y="1" width="10" height="7" fill="#6c9ad8" stroke="#1a1a2a" strokeWidth="1.200" />
              </svg>
            </button>
          </div>
        </div>
        <div className="h-0.5 border-b border-[#5f92d2] bg-white" />
        <div className={menuRow}>
          <Menu
            gap="gap-[13px]"
            items={[
              ["", "", "ile"],
              ["", "E", "dit"],
              ["", "V", "iew"],
              ["", "S", "chematic"],
              ["", "T", "race"],
              ["T", "o", "ols"],
              ["", "W", "indow"],
            ]}
          />
        </div>
        <div className={`${toolRow} h-7 border-b-2 border-[#a8a8a8] pt-0.5`}>
          <div className="-ml-1.5 flex items-center">
            <Tools items={[["zoomOut", "Zoom out"], ["zoomIn", "Zoom in"], ["zoom100", "Zoom 100%"], ["zoomArea", "Zoom area"], ["fit", "Fit"], ["hand", "Pan"]]} />
            <Handle />
            <Tools items={[["undo", "Undo"], ["redo", "Redo"], ["cut", "Cut"]]} />
            <Handle />
            <Tool name="backGreen" label="Previous view" />
            <span className="w-3" />
            <Handle />
            <Tools items={[["dBlue", "Trace driver"], ["lBlue", "Trace load"], ["trace", "Trace connectivity"], ["up", "Up"], ["down", "Down"]]} />
          </div>
        </div>
        <Schematic />
      </section>
    </div>
  );
}
